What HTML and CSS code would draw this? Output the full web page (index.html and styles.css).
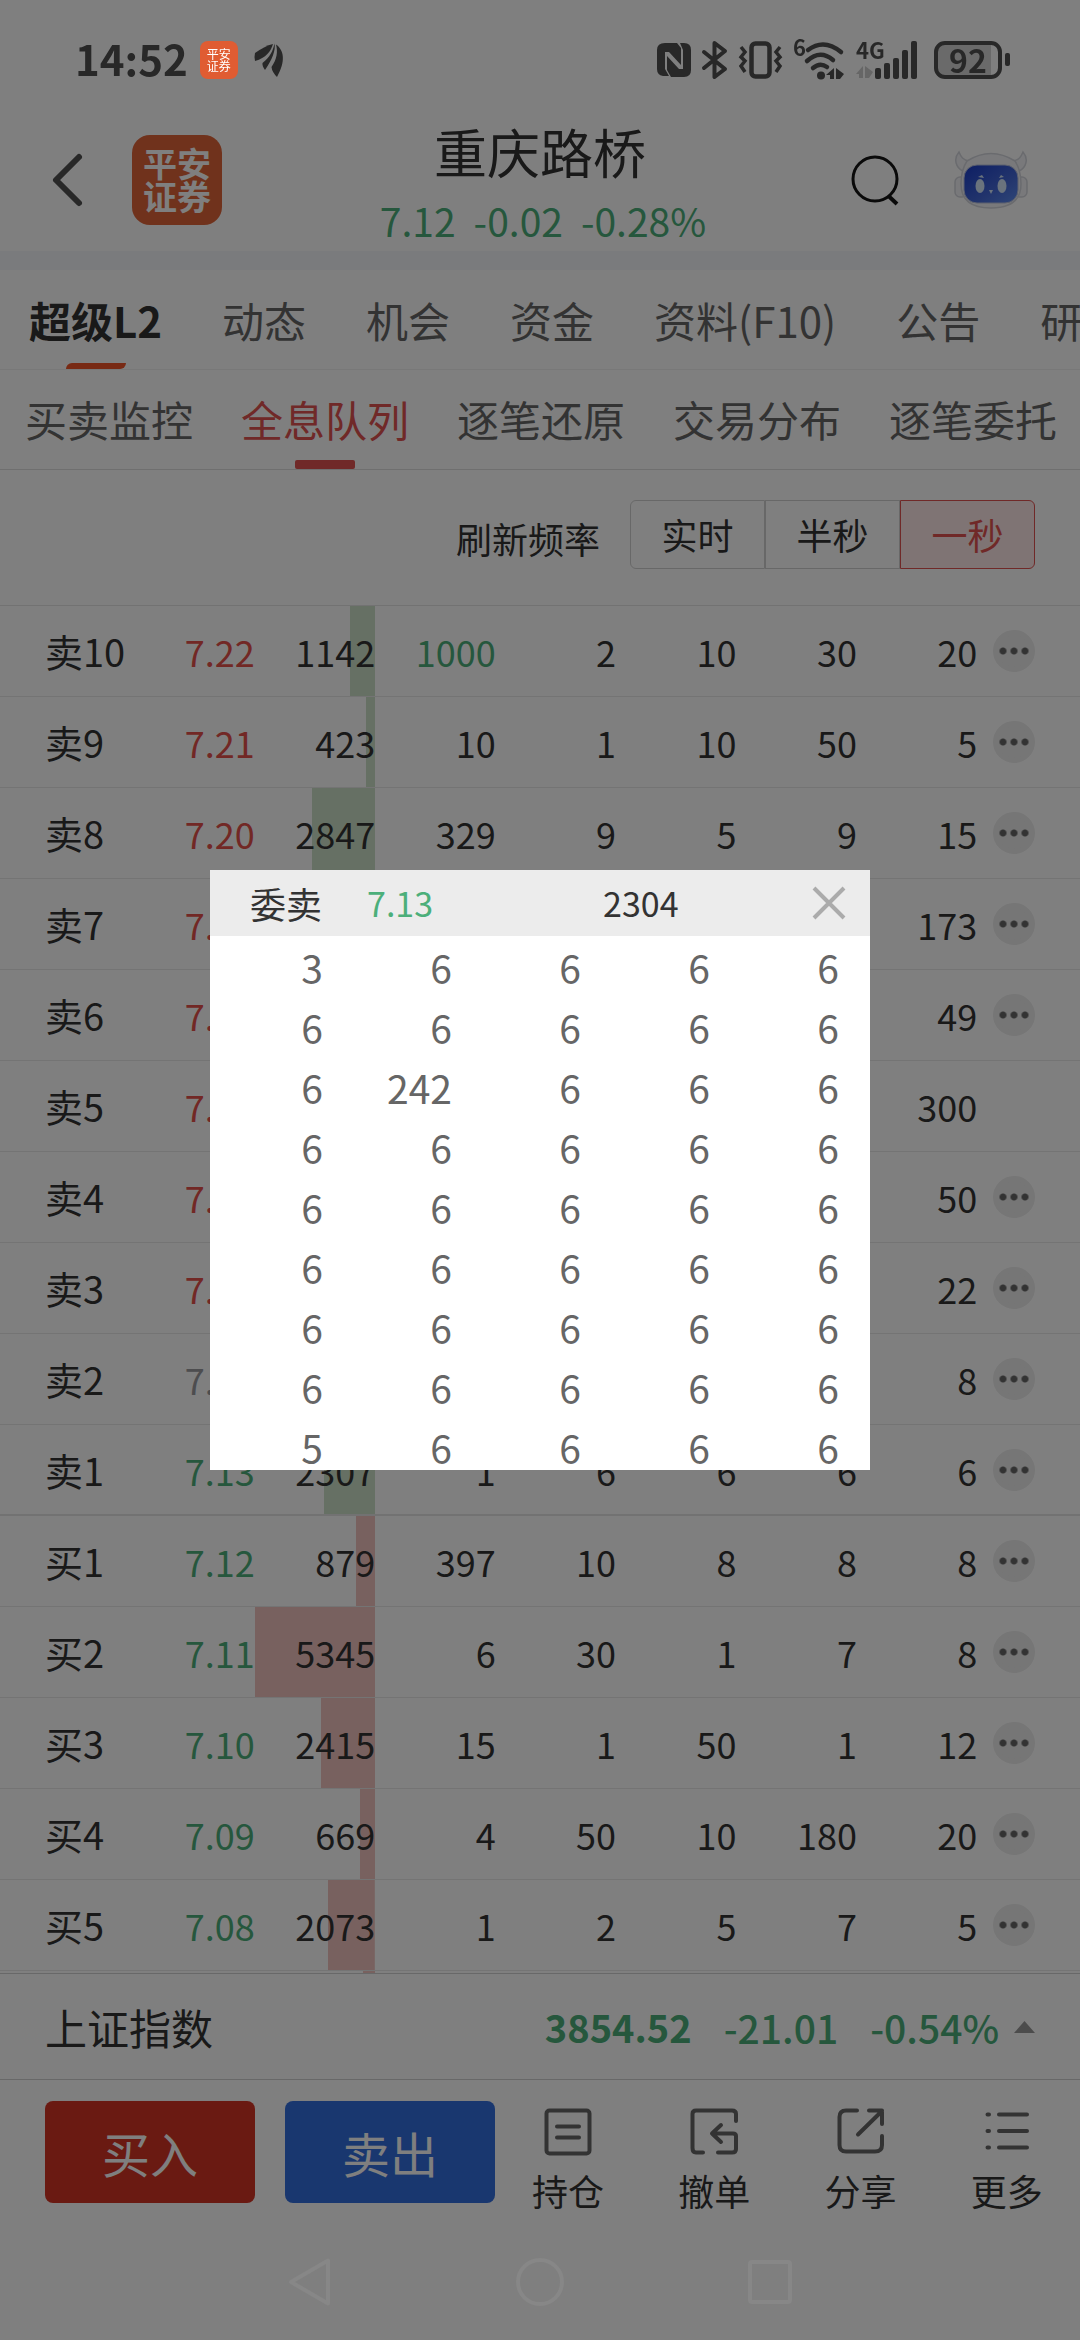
FILE: index.html
```html
<!DOCTYPE html>
<html lang="zh-CN">
<head>
<meta charset="utf-8">
<meta name="viewport" content="width=device-width, initial-scale=1">
<title>重庆路桥</title>
<link rel="stylesheet" href="styles.css">
</head>
<body>
<div class="statusbar">
  <div class="status-left">
    <span class="clock">14:52</span>
    <span class="app-chip">平安<br>证券</span>
    <svg class="leaf" width="30" height="34" viewBox="0 0 30 34" fill="#282828"><path d="M1 10C7 6 13 2 19 1C17 8 12 15 1 18Q0 14 1 10Z"/><path d="M20.500 .5C22 7 18 17 11 27Q8 23 8.500 20C16 14 19 8 20.500 .5Z"/><path d="M22 1.500C30 7 32 18 23 34Q18 29 17.500 24C23 16 24 9 22 1.500Z"/></svg>
  </div>
  <div class="status-right">
    <svg width="34" height="36" viewBox="0 0 34 36"><path fill="#282828" d="M8 1H20L24 6V23L12 10H8V27L12 34L6 34Q0 33 0 27V8Q0 1 8 1ZM23 1H27Q34 1 34 8V28Q34 35 27 35H14L10 28V14L22 27H26V8Z"/></svg>
    <svg width="26" height="38" viewBox="0 0 26 38" fill="none" stroke="#282828" stroke-width="4" stroke-linejoin="round" stroke-linecap="round"><path d="M2 11L23 28L12.500 36V2L23 10L2 27"/></svg>
    <svg width="43" height="38" viewBox="0 0 43 38" fill="none" stroke="#282828"><rect x="12.500" y="2.500" width="18" height="33" rx="4" stroke-width="4.500"/><path stroke-width="3.500" d="M2 6L6 11L2 16L6 20L2 25L6 31M41 6L37 11L41 16L37 20L41 25L37 31"/></svg>
    <svg width="52" height="40" viewBox="0 0 52 40" fill="none" stroke="#282828" stroke-width="4.500" stroke-linecap="round"><text x="0" y="16" class="svg-text" font-size="22">6</text><path d="M15 10Q31-2 48 12M14 21Q27 9 40 20M20 28Q27 22 34 27"/><circle cx="28" cy="35.500" r="4" fill="#282828" stroke="none"/><path stroke="none" fill="#282828" d="M41 28V39H37V35H33ZM43 28L51 34L47 39H43Z"/></svg>
    <svg width="63" height="38" viewBox="0 0 63 38"><text x="0" y="18" class="svg-text" font-size="22">4G</text><path fill="#666" d="M7 25V37H3V33H0ZM9 25L17 31L13 37H9Z"/><g fill="#282828"><rect x="19" y="27" width="6" height="11" rx="2"/><rect x="28" y="22" width="6" height="16" rx="2"/><rect x="37" y="17" width="6" height="21" rx="2"/><rect x="46" y="9" width="6" height="29" rx="2"/><rect x="55" y="0" width="6" height="38" rx="2"/></g></svg>
    <span class="battery">92</span>
  </div>
</div>

<header class="header">
  <button class="icon-btn back" aria-label="返回"><svg width="32" height="56" viewBox="0 0 32 56" fill="none" stroke="#505050" stroke-width="6" stroke-linecap="round" stroke-linejoin="round"><path d="M28 5L5 28L28 51"/></svg></button>
  <a class="brand" href="#">平安<br>证券</a>
  <div class="quote">
    <h1 class="stock">重庆路桥</h1>
    <p class="stock-price"><span>7.12</span><span>-0.02</span><span>-0.28%</span></p>
  </div>
  <button class="icon-btn" aria-label="搜索"><svg width="50" height="54" viewBox="0 0 50 54" fill="none" stroke="#141414" stroke-width="3"><circle cx="25" cy="26" r="22"/><path stroke-width="4" d="M38.500 43L47 51"/></svg></button>
  <button class="icon-btn robot" aria-label="智能助手"><svg width="74" height="60" viewBox="0 0 74 60">
    <defs><linearGradient id="face" x1="0" y1="0" x2="1" y2="1"><stop offset="0" stop-color="#1a3cc8"/><stop offset=".6" stop-color="#4468d8"/><stop offset="1" stop-color="#5c8cf0"/></linearGradient></defs>
    <g fill="#f2f3f7" stroke="#d4d6dd" stroke-width="1.500"><rect x="1" y="27" width="12" height="20" rx="5"/><rect x="61" y="27" width="12" height="20" rx="5"/><path d="M5 2C-1 9 2 18 9 21L15 11C9 10 7 7 5 2ZM69 2C75 9 72 18 65 21L59 11C65 10 67 7 69 2Z"/><path d="M13 11Q37-4 61 11Q67 20 67 34Q67 58 37 58Q7 58 7 34Q7 20 13 11Z"/></g>
    <rect x="10" y="15" width="54" height="38" rx="13" fill="url(#face)" stroke="#b8c0dc"/>
    <g fill="#d4e6fa"><ellipse cx="26" cy="36" rx="4.500" ry="7"/><ellipse cx="48" cy="36" rx="4.500" ry="7"/><path d="M35 40H39L37 44ZM24 27L30 28L28 25ZM45 28L50 27L47 25Z"/></g>
  </svg></button>
</header>

<nav class="tabs">
  <a class="tab active" href="#">超级L2</a><a class="tab" href="#">动态</a><a class="tab" href="#">机会</a><a class="tab" href="#">资金</a><a class="tab" href="#">资料(F10)</a><a class="tab" href="#">公告</a><a class="tab" href="#">研报</a>
</nav>
<nav class="tabs subtabs">
  <a class="tab" href="#">买卖监控</a><a class="tab active" href="#">全息队列</a><a class="tab" href="#">逐笔还原</a><a class="tab" href="#">交易分布</a><a class="tab" href="#">逐笔委托</a>
</nav>

<div class="filter">
  <span id="freq" class="filter-label">刷新频率</span>
  <div class="segment" role="group" aria-labelledby="freq">
    <button>实时</button><button>半秒</button><button class="on" aria-pressed="true">一秒</button>
  </div>
</div>

<main class="book">
  <table class="orders">
    <colgroup><col class="c-label"><col class="c-price"><col class="c-num"><col class="c-num"><col class="c-num"><col class="c-num"><col class="c-num"><col class="c-num"><col></colgroup>
    <tbody class="sell">
      <tr><th>卖10</th><td class="up">7.22</td><td class="qty" style="--w:21%">1142</td><td class="down">1000</td><td>2</td><td>10</td><td>30</td><td>20</td><td><button class="more" aria-label="更多"></button></td></tr>
      <tr><th>卖9</th><td class="up">7.21</td><td class="qty" style="--w:8%">423</td><td>10</td><td>1</td><td>10</td><td>50</td><td>5</td><td><button class="more" aria-label="更多"></button></td></tr>
      <tr><th>卖8</th><td class="up">7.20</td><td class="qty" style="--w:53%">2847</td><td>329</td><td>9</td><td>5</td><td>9</td><td>15</td><td><button class="more" aria-label="更多"></button></td></tr>
      <tr><th>卖7</th><td class="up">7.19</td><td></td><td></td><td></td><td></td><td></td><td>173</td><td><button class="more" aria-label="更多"></button></td></tr>
      <tr><th>卖6</th><td class="up">7.18</td><td></td><td></td><td></td><td></td><td></td><td>49</td><td><button class="more" aria-label="更多"></button></td></tr>
      <tr><th>卖5</th><td class="up">7.17</td><td></td><td></td><td></td><td></td><td></td><td>300</td><td></td></tr>
      <tr><th>卖4</th><td class="up">7.16</td><td></td><td></td><td></td><td></td><td></td><td>50</td><td><button class="more" aria-label="更多"></button></td></tr>
      <tr><th>卖3</th><td class="up">7.15</td><td></td><td></td><td></td><td></td><td></td><td>22</td><td><button class="more" aria-label="更多"></button></td></tr>
      <tr><th>卖2</th><td class="flat">7.14</td><td></td><td></td><td></td><td></td><td></td><td>8</td><td><button class="more" aria-label="更多"></button></td></tr>
      <tr><th>卖1</th><td class="down">7.13</td><td class="qty" style="--w:43%">2307</td><td>1</td><td>6</td><td>6</td><td>6</td><td>6</td><td><button class="more" aria-label="更多"></button></td></tr>
    </tbody>
    <tbody class="buy">
      <tr><th>买1</th><td class="down">7.12</td><td class="qty" style="--w:16%">879</td><td>397</td><td>10</td><td>8</td><td>8</td><td>8</td><td><button class="more" aria-label="更多"></button></td></tr>
      <tr><th>买2</th><td class="down">7.11</td><td class="qty" style="--w:100%">5345</td><td>6</td><td>30</td><td>1</td><td>7</td><td>8</td><td><button class="more" aria-label="更多"></button></td></tr>
      <tr><th>买3</th><td class="down">7.10</td><td class="qty" style="--w:45%">2415</td><td>15</td><td>1</td><td>50</td><td>1</td><td>12</td><td><button class="more" aria-label="更多"></button></td></tr>
      <tr><th>买4</th><td class="down">7.09</td><td class="qty" style="--w:13%">669</td><td>4</td><td>50</td><td>10</td><td>180</td><td>20</td><td><button class="more" aria-label="更多"></button></td></tr>
      <tr><th>买5</th><td class="down">7.08</td><td class="qty" style="--w:39%">2073</td><td>1</td><td>2</td><td>5</td><td>7</td><td>5</td><td><button class="more" aria-label="更多"></button></td></tr>
      <tr><th></th><td></td><td class="qty" style="--w:10%"></td><td></td><td></td><td></td><td></td><td></td><td></td></tr>
    </tbody>
  </table>
</main>

<section class="index">
  <span class="index-name">上证指数</span>
  <span class="index-last">3854.52</span>
  <span class="index-chg">-21.01</span>
  <span class="index-pct">-0.54%</span>
  <svg class="caret" width="21" height="12" viewBox="0 0 21 12" fill="#999"><path d="M10.500 0L21 12H0Z"/></svg>
</section>

<footer class="actions">
  <button class="trade buy-btn">买入</button>
  <button class="trade sell-btn">卖出</button>
  <div class="tools">
    <a class="tool" href="#"><svg width="48" height="48" viewBox="0 0 48 48"><rect x="2.500" y="2.500" width="43" height="43" rx="3"/><path d="M13 18.500H35M13 29.500H35"/></svg>持仓</a>
    <a class="tool" href="#"><svg width="48" height="48" viewBox="0 0 48 48"><path d="M46 13V6Q46 2.500 42 2.500H6Q2.500 2.500 2.500 6V40Q2.500 44.500 6 44.500H13M28 44.500H42Q46 44.500 46 41V28Q46 25.500 43 25.500H22M31 17L22 25.500L31 34"/></svg>撤单</a>
    <a class="tool" href="#"><svg width="48" height="48" viewBox="0 0 48 48"><path d="M20 2.500H9Q2.500 2.500 2.500 9V37Q2.500 43.500 9 43.500H38Q45 43.500 45 37V28M32 2.500H45V16M45 3L21 26.500"/></svg>分享</a>
    <a class="tool" href="#"><svg width="48" height="48" viewBox="0 0 48 48"><path d="M4.500 6.500H6M16 6.500H44M4.500 23H6M16 23H44M4.500 39.500H6M16 39.500H44"/></svg>更多</a>
  </div>
</footer>

<div class="sysnav">
  <svg width="48" height="50" viewBox="0 0 48 50"><path d="M42 3.500V46.500L5 25Z"/></svg>
  <svg width="50" height="50" viewBox="0 0 50 50"><circle cx="25" cy="25" r="22"/></svg>
  <svg width="48" height="50" viewBox="0 0 48 50"><rect x="4" y="5" width="40" height="40" rx="2"/></svg>
</div>

<div class="overlay">
  <section class="dialog" role="dialog" aria-label="委卖队列">
    <div class="dialog-head">
      <span class="side">委卖</span><span class="dialog-price">7.13</span><span class="total">2304</span>
      <button class="icon-btn close" aria-label="关闭"><svg width="34" height="34" viewBox="0 0 34 34" stroke="#ababab" stroke-width="4"><path d="M2 2L32 32M32 2L2 32"/></svg></button>
    </div>
    <ul class="queue">
      <li>3</li><li>6</li><li>6</li><li>6</li><li>6</li>
      <li>6</li><li>6</li><li>6</li><li>6</li><li>6</li>
      <li>6</li><li>242</li><li>6</li><li>6</li><li>6</li>
      <li>6</li><li>6</li><li>6</li><li>6</li><li>6</li>
      <li>6</li><li>6</li><li>6</li><li>6</li><li>6</li>
      <li>6</li><li>6</li><li>6</li><li>6</li><li>6</li>
      <li>6</li><li>6</li><li>6</li><li>6</li><li>6</li>
      <li>6</li><li>6</li><li>6</li><li>6</li><li>6</li>
      <li>5</li><li>6</li><li>6</li><li>6</li><li>6</li>
    </ul>
  </section>
</div>
</body>
</html>
```
FILE: styles.css
```css
* { box-sizing: border-box; }
body {
  margin: 0;
  height: 100vh;
  display: flex;
  flex-direction: column;
  overflow: hidden;
  background: #fff;
  color: #333;
  font-family: "Noto Sans CJK SC", "Noto Sans", sans-serif;
  font-size: 36px;
}
svg { display: block; flex: none; overflow: visible; }
button { font: inherit; color: inherit; border: 0; padding: 0; background: none; }
a { color: inherit; text-decoration: none; }
h1, p, ul { margin: 0; padding: 0; }

/* System status bar, drawn above the dimmed page */
.statusbar {
  position: relative;
  z-index: 2;
  flex: none;
  height: 109px;
  padding: 10px 66px 0 75px;
  display: flex;
  align-items: center;
  justify-content: space-between;
  color: #282828;
}
.status-left, .status-right { display: flex; align-items: center; }
.clock { padding-bottom: 4px; font-size: 42px; font-weight: 600; line-height: 46px; }
.app-chip {
  width: 38px;
  height: 38px;
  margin-left: 12px;
  padding-top: 7px;
  border-radius: 8px;
  background: #e05c32;
  color: #fff;
  font-size: 12px;
  line-height: 12px;
  text-align: center;
}
.leaf { margin-left: 16px; }
.status-right { gap: 11px; }
.svg-text { font-weight: 700; fill: #282828; stroke: none; }
.battery {
  position: relative;
  width: 68px;
  height: 38px;
  margin: 0 12px 0 4px;
  border: 4px solid #282828;
  border-radius: 11px;
  background: linear-gradient(90deg, #6a6a6a 88%, transparent 88%);
  font-size: 32px;
  font-weight: 600;
  line-height: 28px;
  text-align: center;
}
.battery::after {
  content: "";
  position: absolute;
  right: -12px;
  top: 8px;
  width: 5px;
  height: 13px;
  border-radius: 2px;
  background: #282828;
}

.header {
  flex: none;
  height: 142px;
  padding: 0 52px 0 51px;
  display: flex;
  align-items: center;
}
.icon-btn { flex: none; }
.brand {
  width: 90px;
  height: 90px;
  margin-left: 49px;
  padding-top: 11px;
  border-radius: 18px;
  background: #e06438;
  color: #fff;
  font-size: 34px;
  font-weight: 600;
  line-height: 33px;
  text-align: center;
}
.quote { flex: 1; padding: 13px 0 0 8px; text-align: center; }
.stock { font-size: 53px; font-weight: 400; line-height: 66px; }
.stock-price {
  display: flex;
  justify-content: center;
  gap: 18px;
  padding-left: 6px;
  color: #4caf7a;
  font-size: 39px;
  line-height: 72px;
}
.robot { margin-left: 54px; }

.tabs {
  flex: none;
  height: 119px;
  display: flex;
  gap: 60px;
  padding-left: 29px;
  overflow: hidden;
  border-top: 19px solid #f4f6fa;
  border-bottom: 1px solid #f0f0f0;
  color: #666;
  font-size: 42px;
  line-height: 99px;
  white-space: nowrap;
}
.tab { position: relative; flex: none; }
.tabs .active { color: #333; font-weight: 700; }
.tabs .active::after {
  content: "";
  position: absolute;
  left: 50%;
  bottom: 0;
  width: 60px;
  height: 6px;
  margin-left: -30px;
  border-radius: 6px 0;
  background: #f05428;
}
.subtabs {
  height: 100px;
  gap: 48px;
  padding-left: 25px;
  border-top: 0;
  border-bottom-color: #dedede;
  line-height: 97px;
}
.subtabs .active { color: #e15250; font-weight: 400; }
.subtabs .active::after { height: 9px; border-radius: 2px; background: #e15250; }

.filter {
  flex: none;
  height: 136px;
  padding: 30px 45px 0;
  display: flex;
  align-items: flex-start;
  justify-content: flex-end;
  gap: 30px;
  border-bottom: 1px solid #e4e4e4;
}
.filter-label { line-height: 76px; }
.segment { display: flex; }
.segment button {
  width: 135px;
  height: 69px;
  border: 1px solid #d0d0d0;
  line-height: 67px;
}
.segment button:first-child { border-radius: 6px 0 0 6px; }
.segment button:last-child { border-radius: 0 6px 6px 0; }
.segment .on { border-color: #e15250; background: #ffe8e8; color: #e15250; }

.book { flex: 1; min-height: 0; overflow: hidden; }
.orders { width: 100%; table-layout: fixed; border-collapse: separate; border-spacing: 0; }
.c-label { width: 17.1%; }
.c-price { width: 6.5%; }
.c-num { width: 11.15%; }
.orders th, .orders td {
  height: 91px;
  padding: 0;
  border-bottom: 1px solid #e8e8e8;
  font-weight: 400;
  line-height: 54px;
  text-align: right;
  white-space: nowrap;
}
.orders th { padding-left: 45px; font-size: 38px; text-align: left; }
.orders td:nth-child(2) { text-align: left; }
.sell tr:last-child > * { border-bottom: 2px solid #e4e4e4; }
.qty {
  background: linear-gradient(var(--bar), var(--bar)) right / var(--w) 100% no-repeat;
  background-clip: padding-box;
}
.sell { --bar: #cce0c8; }
.buy { --bar: #f0c2be; }
.up { color: #e4504a; }
.down, .index-last, .index-chg, .index-pct { color: #4caf7a; }
.flat { color: #9a9a9e; }
.more {
  display: block;
  width: 42px;
  height: 42px;
  margin-left: 16px;
  border-radius: 50%;
  background: radial-gradient(circle at 50% 50%, #666 3px, transparent 4px) center / 11px 42px repeat-x, #ececec;
  border: 5px solid #ececec;
}

.index {
  flex: none;
  height: 106px;
  padding: 0 45px;
  display: flex;
  align-items: center;
  border-top: 1px solid #d0d0d0;
  font-size: 39px;
}
.index-name { flex: 1; font-size: 42px; }
.index-last { font-size: 38px; font-weight: 700; }
.index-chg, .index-pct { margin-left: 32px; font-weight: 500; }
.caret { margin-left: 15px; }

.actions {
  flex: none;
  height: 145px;
  padding: 21px 0 0 45px;
  display: flex;
  align-items: flex-start;
  border-top: 1px solid #d0d0d0;
}
.trade {
  flex: none;
  width: 210px;
  height: 102px;
  margin-right: 30px;
  border-radius: 8px;
  color: #fff;
  font-size: 48px;
}
.buy-btn { background: #d43425; }
.sell-btn { margin-right: 0; background: #326ede; }
.tools { flex: 1; display: flex; padding-top: 7px; }
.tool { flex: 1; display: flex; flex-direction: column; align-items: center; line-height: 68px; }
.tool svg { fill: none; stroke: #666; stroke-width: 4; stroke-linecap: round; stroke-linejoin: round; }

/* System navigation keys, also above the dimmed page */
.sysnav {
  position: relative;
  z-index: 2;
  flex: none;
  height: 116px;
  display: flex;
  align-items: center;
  justify-content: center;
  gap: 181px;
}
.sysnav svg { fill: none; stroke: #878787; stroke-width: 4; stroke-linejoin: round; }

.overlay {
  position: fixed;
  inset: 0;
  z-index: 1;
  display: flex;
  align-items: center;
  justify-content: center;
  background: rgba(0, 0, 0, .5);
}
.dialog {
  width: 660px;
  max-width: 90%;
  height: 600px;
  overflow: hidden;
  background: #fff;
}
.dialog-head {
  height: 66px;
  padding: 0 24px 0 40px;
  display: flex;
  align-items: center;
  background: #ececec;
  line-height: 66px;
}
.dialog-price { margin-left: 45px; color: #4caf7a; font-size: 34px; }
.total { flex: 1; padding-left: 170px; font-size: 34px; }
.queue {
  display: grid;
  grid-template-columns: 1fr repeat(4, 129px);
  padding: 1px 31px 0 0;
  list-style: none;
  color: #666;
  font-size: 39px;
  line-height: 60px;
  text-align: right;
}
```
